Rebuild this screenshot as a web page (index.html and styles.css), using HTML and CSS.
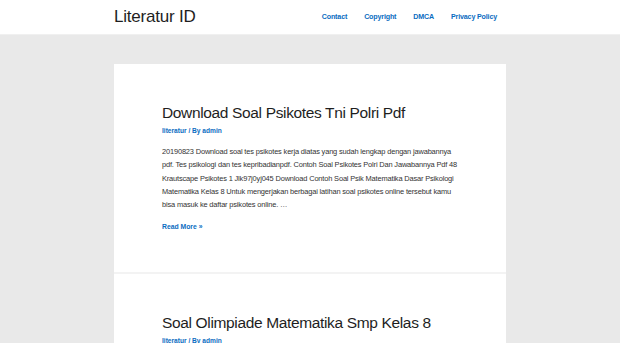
FILE: index.html
```html
<!DOCTYPE html>
<html lang="id">
<head>
<meta charset="utf-8">
<title>Literatur ID</title>
<link rel="stylesheet" href="styles.css">
</head>
<body>
<header class="site-header">
  <div class="container header-inner">
    <div class="logo">Literatur ID</div>
    <nav class="nav">
      <a href="#">Contact</a>
      <a href="#">Copyright</a>
      <a href="#">DMCA</a>
      <a href="#">Privacy Policy</a>
    </nav>
  </div>
</header>
<main class="container main">
  <article class="card">
    <h2 class="title">Download Soal Psikotes Tni Polri Pdf</h2>
    <div class="meta"><a href="#">literatur</a> / By <a href="#">admin</a></div>
    <p class="excerpt">20190823 Download soal tes psikotes kerja diatas yang sudah lengkap dengan jawabannya pdf. Tes psikologi dan tes kepribadianpdf. Contoh Soal Psikotes Polri Dan Jawabannya Pdf 48 Krautscape Psikotes 1 Jlk97j0yj045 Download Contoh Soal Psik Matematika Dasar Psikologi Matematika Kelas 8 Untuk mengerjakan berbagai latihan soal psikotes online tersebut kamu bisa masuk ke daftar psikotes online. …</p>
    <a class="read-more" href="#">Read More »</a>
  </article>
  <article class="card">
    <h2 class="title">Soal Olimpiade Matematika Smp Kelas 8</h2>
    <div class="meta"><a href="#">literatur</a> / By <a href="#">admin</a></div>
  </article>
</main>
</body>
</html>
```

FILE: styles.css
```css
* { box-sizing: border-box; }
html, body { margin: 0; padding: 0; }
body {
  background: #e9e9e9;
  font-family: "Liberation Sans", Arial, sans-serif;
  color: #3a3a3a;
  overflow: hidden;
}
a { color: #0274be; text-decoration: none; }
.container {
  width: 392px;
  margin: 0 auto;
}
.site-header {
  background: #fff;
  height: 35px;
  border-bottom: 1px solid #f0f0f0;
}
.header-inner {
  height: 34px;
  display: flex;
  align-items: center;
  justify-content: space-between;
}
.logo {
  font-size: 17px;
  color: #1e1e1e;
  letter-spacing: -0.2px;
}
.nav {
  display: flex;
  padding-right: 9px;
  gap: 17px;
}
.nav a {
  font-size: 7.1px;
  font-weight: bold;
  color: #0a6cc1;
  letter-spacing: -0.15px;
}
.main {
  padding-top: 29px;
}
.card {
  background: #fff;
  padding: 37px 48px 39px 48px;
  border-bottom: 2px solid #f3f3f3;
}
.title {
  margin: 0;
  font-size: 15.5px;
  font-weight: normal;
  color: #1e1e1e;
  line-height: 24px;
  letter-spacing: -0.35px;
  white-space: nowrap;
}
.meta {
  font-size: 6.6px;
  font-weight: bold;
  color: #0a6cc1;
  margin-top: 1px;
  line-height: 10px;
}
.meta a { color: #0a6cc1; }
.excerpt {
  margin: 9px 0 0 0;
  font-size: 7.45px;
  line-height: 13.3px;
  letter-spacing: -0.16px;
  color: #333;
}
.read-more {
  display: inline-block;
  margin-top: 11px;
  font-size: 6.8px;
  font-weight: bold;
  color: #0a6cc1;
  line-height: 10px;
}
```
